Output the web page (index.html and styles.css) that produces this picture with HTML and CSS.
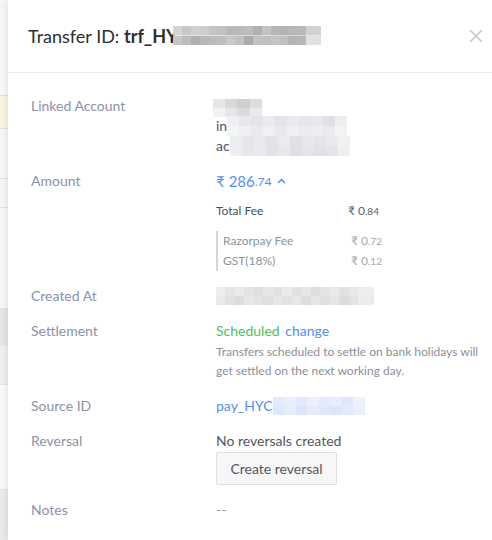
FILE: index.html
```html
<!DOCTYPE html>
<html>
<head>
<meta charset="utf-8">
<link rel="stylesheet" href="styles.css">
</head>
<body>
<div class="page">
  <div class="backdrop">
    <div class="bg b1"></div>
    <div class="bg b2"></div>
    <div class="bg b3"></div>
    <div class="bg b4"></div>
    <div class="bg b5"></div>
    <div class="bg b6"></div>
    <div class="bg b7"></div>
    <div class="bg b8"></div>
    <div class="bg b9"></div>
  </div>
  <div class="panel">
    <div class="header">
      <div class="title"><span>Transfer ID: </span><b>trf_HY</b><span class="mosaic m-title"></span></div>
      <button class="close" aria-label="Close">
        <svg width="14" height="14" viewBox="0 0 14 14"><path d="M1 1L13 13M13 1L1 13" stroke="#c6c6c6" stroke-width="1.6" fill="none"/></svg>
      </button>
    </div>
    <div class="body">
      <div class="row">
        <div class="label">Linked Account</div>
        <div class="value">
          <div class="line"><span class="mosaic m-acc1"></span></div>
          <div class="line">in<span class="mosaic m-acc2"></span></div>
          <div class="line">ac<span class="mosaic m-acc3"></span></div>
        </div>
      </div>
      <div class="row">
        <div class="label">Amount</div>
        <div class="value">
          <div class="line amount"><span class="rs">₹</span> 286<span class="dec">.74</span>
            <svg class="chev" width="9" height="6" viewBox="0 0 9 6"><path d="M1 5L4.5 1.5L8 5" stroke="#528ff0" stroke-width="1.5" fill="none"/></svg>
          </div>
          <div class="fee total"><span class="fname">Total Fee</span><span class="famt">₹ 0<small>.84</small></span></div>
          <div class="breakdown">
            <div class="fee sub"><span class="fname">Razorpay Fee</span><span class="famt">₹ 0<small>.72</small></span></div>
            <div class="fee sub"><span class="fname">GST(18%)</span><span class="famt">₹ 0<small>.12</small></span></div>
          </div>
        </div>
      </div>
      <div class="row">
        <div class="label">Created At</div>
        <div class="value"><div class="line"><span class="mosaic m-date"></span></div></div>
      </div>
      <div class="row">
        <div class="label">Settlement</div>
        <div class="value">
          <div class="line"><span class="green">Scheduled</span> <a class="link change">change</a></div>
          <p class="hint">Transfers scheduled to settle on bank holidays will get settled on the next working day.</p>
        </div>
      </div>
      <div class="row">
        <div class="label">Source ID</div>
        <div class="value"><div class="line"><a class="link">pay_HYC</a><span class="mosaic m-pay"></span></div></div>
      </div>
      <div class="row">
        <div class="label">Reversal</div>
        <div class="value">
          <div class="line">No reversals created</div>
          <button class="btn">Create reversal</button>
        </div>
      </div>
      <div class="row">
        <div class="label">Notes</div>
        <div class="value"><div class="line muted">--</div></div>
      </div>
    </div>
  </div>
</div>
</body>
</html>
```

FILE: styles.css
```css
* { box-sizing: border-box; }
html, body { margin: 0; padding: 0; }
body {
  width: 492px;
  height: 540px;
  overflow: hidden;
  font-family: Lato, "Noto Sans", "DejaVu Sans", sans-serif;
  background: #fff;
}
.page { display: flex; height: 540px; }
.backdrop {
  width: 8px;
  flex: none;
  display: flex;
  flex-direction: column;
  background: #f6f6f6;
}
.bg { flex: none; border-bottom: 1px solid #dfe2e2; }
.b1 { height: 96px; background: #f7f7f7; }
.b2 { height: 33px; background: #f9f2de; }
.b3 { height: 50px; background: #f6f6f6; }
.b4 { height: 29px; background: #f5f5f5; }
.b5 { height: 101px; background: #f7f7f7; }
.b6 { height: 37px; background: #e2e6e6; }
.b7 { height: 39px; background: #efefef; border-bottom-color: #d9e9ee; }
.b8 { height: 105px; background: #f9f9f9; }
.b9 { flex: 1; background: #e6eaea; border-bottom: 0; }

.panel {
  flex: 1;
  background: #fff;
  box-shadow: -2px 0 6px rgba(0,0,0,0.07);
  position: relative;
}
.header {
  height: 73px;
  border-bottom: 1px solid #e9eded;
  display: flex;
  align-items: center;
  justify-content: space-between;
  padding: 0 9px 0 20px;
}
.title {
  font-size: 18px;
  color: #2e2e2e;
  display: flex;
  align-items: center;
  margin-top: -1px;
}
.title span:first-child { white-space: pre; }
.title b { font-weight: 700; }
.close {
  border: 0;
  background: none;
  padding: 0;
  width: 14px;
  height: 14px;
  margin-top: -1px;
  display: flex;
}

.mosaic { display: inline-block; vertical-align: middle; }
.m-title {
  width: 148px;
  height: 19px;
  margin-left: -5px;
  background:
    linear-gradient(90deg, #d4d4d4 0 6%, #c8c8c8 6% 12%, #d0d0d0 12% 18%, #cdcdcd 18% 24%, #c4c4c4 24% 30%, #c2c2c2 30% 36%, #b8b8b8 36% 42%, #bababa 42% 48%, #bdbdbd 48% 54%, #b0b0b0 54% 60%, #c4c4c4 60% 66%, #b6b6b6 66% 72%, #b3b3b3 72% 78%, #b7b7b7 78% 84%, #b9b9b9 84% 90%, #d2d2d2 90% 100%) top / 100% 50% no-repeat,
    linear-gradient(90deg, #c6c6c6 0 6%, #bdbdbd 6% 12%, #b0b0b0 12% 18%, #b8b8b8 18% 24%, #bcbcbc 24% 30%, #bebebe 30% 36%, #c9c9c9 36% 42%, #c1c1c1 42% 48%, #ababab 48% 54%, #c2c2c2 54% 60%, #bfbfbf 60% 66%, #c4c4c4 66% 72%, #c0c0c0 72% 78%, #b5b5b5 78% 84%, #b8b8b8 84% 90%, #e0e0e0 90% 100%) bottom / 100% 50% no-repeat;
}

.body { padding: 23px 0 0 23px; }
.row { display: flex; margin-bottom: 15px; }
.label {
  width: 185px;
  flex: none;
  font-size: 14px;
  line-height: 20px;
  color: #8b92a9;
}
.value {
  flex: 1;
  font-size: 14px;
  line-height: 20px;
  color: #515761;
}
.line { height: 20px; white-space: nowrap; }
.m-acc1 {
  width: 49px;
  height: 18px;
  margin: 3px 0 0 -3px;
  vertical-align: top;
  background:
    linear-gradient(90deg, #e6e6e6 0 25%, #d9d9d9 25% 50%, #cfcfcf 50% 75%, #dcdcdc 75% 100%) top / 100% 50% no-repeat,
    linear-gradient(90deg, #f2f2f2 0 25%, #e6e6e6 25% 50%, #dadada 50% 75%, #ebebeb 75% 100%) bottom / 100% 50% no-repeat;
}
.m-acc2, .m-acc3 { width: 120px; height: 20px; margin-left: 0; vertical-align: top; }
.m-acc2 {
  background:
    linear-gradient(90deg, #eef0f3 0 10%, #e6e8ec 10% 20%, #e2e4e9 20% 30%, #e9ebef 30% 40%, #e1e3e8 40% 50%, #e8eaee 50% 60%, #e4e6eb 60% 70%, #e7e9ed 70% 80%, #dfe1e6 80% 90%, #eceef1 90% 100%) top / 100% 50% no-repeat,
    linear-gradient(90deg, #f4f5f6 0 10%, #eff0f2 10% 20%, #eaebee 20% 30%, #f0f1f3 30% 40%, #e9eaed 40% 50%, #eff0f3 50% 60%, #ebecef 60% 70%, #edeef1 70% 80%, #e9eaed 80% 90%, #f2f3f5 90% 100%) bottom / 100% 50% no-repeat;
}
.m-acc3 {
  background:
    linear-gradient(90deg, #eceef1 0 10%, #e4e6ea 10% 20%, #e7e9ed 20% 30%, #e1e3e8 30% 40%, #e9ebee 40% 50%, #dfe1e6 50% 60%, #e6e8ec 60% 70%, #e2e4e8 70% 80%, #e8eaee 80% 90%, #f0f1f3 90% 100%) top / 100% 50% no-repeat,
    linear-gradient(90deg, #eeeff2 0 10%, #e6e7eb 10% 20%, #e9eaed 20% 30%, #e2e3e8 30% 40%, #e7e8ec 40% 50%, #dfe0e5 50% 60%, #e4e5e9 60% 70%, #e1e2e7 70% 80%, #e3e4e8 80% 90%, #eeeff1 90% 100%) bottom / 100% 50% no-repeat;
}

.amount { color: #528ff0; font-size: 15px; display: flex; align-items: center; }
.amount .rs { margin-right: 4px; }
.amount .dec { font-size: 12px; margin-top: 2px; }
.amount .chev { margin-left: 5px; margin-top: -1px; }

.fee { display: flex; font-size: 12px; line-height: 20px; }
.fee small { font-size: 10px; }
.total { margin-top: 10px; color: #4a4f57; }
.total .fname { width: 132px; }
.breakdown {
  margin-top: 10px;
  border-left: 2px solid #d2d6de;
  padding-left: 5px;
}
.sub { color: #8e939b; }
.sub .fname { width: 128px; }
.sub .famt { color: #a4a8ae; }
.total .famt { color: #5a5f66; }

.m-date {
  width: 158px;
  height: 18px;
  margin-top: 1px;
  vertical-align: top;
  background:
    linear-gradient(90deg, #eeeeee 0 6%, #e4e4e4 6% 12%, #e9e9e9 12% 18%, #e2e2e2 18% 24%, #dedede 24% 30%, #e6e6e6 30% 36%, #e1e1e1 36% 42%, #eaeaea 42% 48%, #e0e0e0 48% 54%, #e7e7e7 54% 60%, #dddddd 60% 66%, #e4e4e4 66% 72%, #e9e9e9 72% 78%, #e0e0e0 78% 84%, #e8e8e8 84% 90%, #ededed 90% 100%) top / 100% 50% no-repeat,
    linear-gradient(90deg, #e9e9e9 0 6%, #e1e1e1 6% 12%, #dcdcdc 12% 18%, #e6e6e6 18% 24%, #e3e3e3 24% 30%, #dfdfdf 30% 36%, #e8e8e8 36% 42%, #e2e2e2 42% 48%, #e7e7e7 48% 54%, #dddddd 54% 60%, #e5e5e5 60% 66%, #e0e0e0 66% 72%, #e6e6e6 72% 78%, #dbdbdb 78% 84%, #e3e3e3 84% 90%, #ececec 90% 100%) bottom / 100% 50% no-repeat;
}

.green { color: #4fbf5a; }
.link { color: #528ff0; text-decoration: none; cursor: pointer; }
.change { margin-left: 2px; }
.hint {
  margin: 0;
  padding: 1px 0;
  font-size: 12px;
  line-height: 19px;
  color: #8a8f98;
  max-width: 264px;
}
.m-pay {
  width: 92px;
  height: 18px;
  margin-top: 1px;
  vertical-align: top;
  background:
    linear-gradient(90deg, #e3ecfc 0 12%, #e8effd 12% 25%, #e1eafc 25% 37%, #eaf0fd 37% 50%, #e2ebfc 50% 62%, #e7eefd 62% 75%, #dfe8fb 75% 87%, #edf2fd 87% 100%) top / 100% 50% no-repeat,
    linear-gradient(90deg, #dfe8fb 0 12%, #e6edfc 12% 25%, #dce6fb 25% 37%, #e4ecfc 37% 50%, #e0e9fb 50% 62%, #dbe5fb 62% 75%, #e2eafc 75% 87%, #e9effd 87% 100%) bottom / 100% 50% no-repeat;
}
.btn {
  margin-top: 1px;
  width: 121px;
  height: 33px;
  font-family: inherit;
  font-size: 14px;
  color: #515761;
  background: #f7f7f7;
  border: 1px solid #dcdfe0;
  border-radius: 2px;
  padding: 0;
}
.muted { color: #9a9ea5; }
```
